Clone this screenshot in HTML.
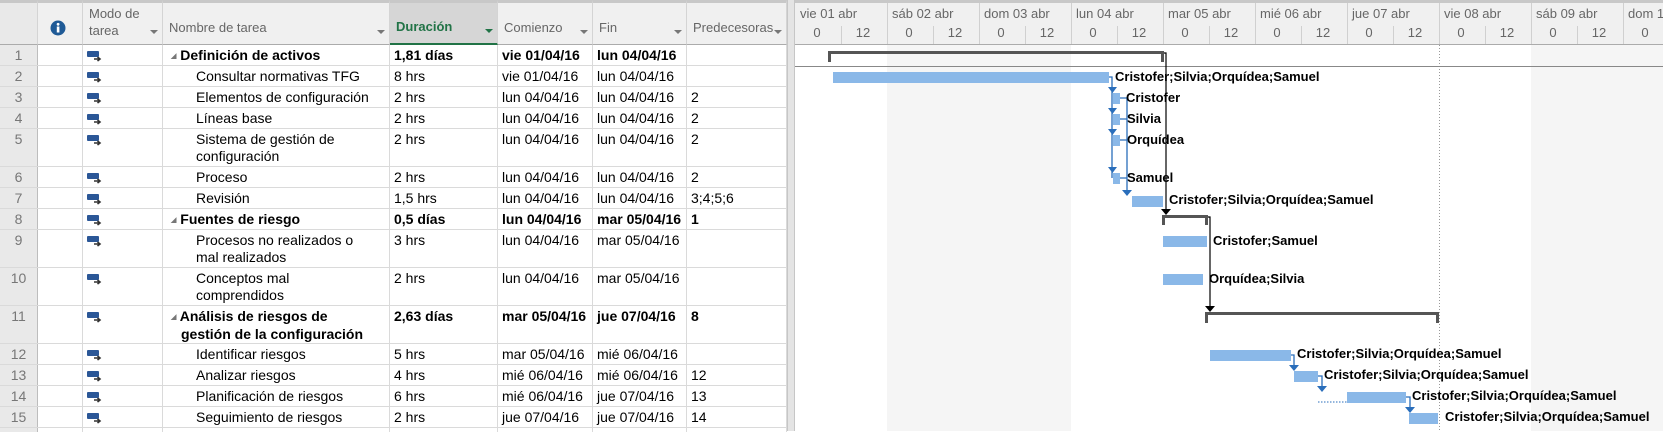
<!DOCTYPE html>
<html><head><meta charset="utf-8"><style>
*{margin:0;padding:0;box-sizing:border-box}
body{width:1663px;height:431px;overflow:hidden;background:#fff;font-family:"Liberation Sans",Arial,sans-serif;position:relative}
.a{position:absolute}
.hd{position:absolute;top:0;height:45px;background:#f0f0f0;border-top:3px solid #c8c8c8;border-bottom:1px solid #ababab;border-right:1px solid #d4d4d4;color:#666;font-size:13px}
.hd span{position:absolute;bottom:9px;left:6px;white-space:nowrap}
.dd{position:absolute;bottom:10px;right:4px;width:0;height:0;border-left:4px solid transparent;border-right:4px solid transparent;border-top:4px solid #777}
.row{position:absolute;left:0;width:787px;border-bottom:1px solid #dadada;font-size:14px;color:#000}
.row div{position:absolute;top:0;bottom:0;border-right:1px solid #dadada;padding:2px 0 0 4px;line-height:17px;white-space:nowrap;overflow:hidden}
.num{left:0;width:38px;background:#e9e9e9;color:#777;text-align:center;padding-left:0!important;border-right:1px solid #bdbdbd!important}
.inf{left:38px;width:45px}
.mod{left:83px;width:80px}
.nm{left:163px;width:227px}
.du{left:390px;width:108px}
.co{left:498px;width:95px}
.fi{left:593px;width:94px}
.pr{left:687px;width:100px}
.b{font-weight:bold}
.ic{position:absolute;left:4px;top:6px}
.tri{font-size:7px;color:#777;vertical-align:2px}
</style></head><body>
<div class="hd" style="left:0;width:38px;background:#e9e9e9"></div>
<div class="hd" style="left:38px;width:45px"><svg class="a" style="left:12px;top:17px" width="16" height="16"><circle cx="8" cy="8" r="7.5" fill="#1f5a96"/><rect x="6.8" y="6.5" width="2.6" height="6" fill="#fff"/><circle cx="8.1" cy="4.3" r="1.4" fill="#fff"/></svg></div>
<div class="hd" style="left:83px;width:80px"><span style="bottom:5px;line-height:17px">Modo de<br>tarea</span><div class="dd"></div></div>
<div class="hd" style="left:163px;width:227px"><span>Nombre de tarea</span><div class="dd"></div></div>
<div class="hd" style="left:390px;width:108px;background:#d6d6d6;border-bottom:2px solid #217346;color:#217346;font-weight:bold"><span>Duración</span><div class="dd" style="border-top-color:#217346"></div></div>
<div class="hd" style="left:498px;width:95px"><span>Comienzo</span><div class="dd"></div></div>
<div class="hd" style="left:593px;width:94px"><span>Fin</span><div class="dd"></div></div>
<div class="hd" style="left:687px;width:100px"><span>Predecesoras</span><div class="dd"></div></div>
<div class="a" style="left:787px;top:0;width:8px;height:431px;background:#e4e4e4;border-left:1px solid #c6c6c6;border-right:1px solid #c6c6c6"></div>

<div class="row" style="top:45px;height:21px"><div class="num">1</div><div class="inf"></div><div class="mod"><svg class="ic" width="16" height="12"><rect x="0" y="0" width="12" height="6" rx="1" fill="#2b5797"/><path d="M7 8H12.5M10.5 6L13 8L10.5 10" stroke="#333" stroke-width="1.6" fill="none"/></svg></div><div class="nm b" style="padding-left:8px"><span class="tri">◢</span> Definición de activos</div><div class="du b">1,81 días</div><div class="co b">vie 01/04/16</div><div class="fi b">lun 04/04/16</div><div class="pr"></div></div>
<div class="row" style="top:66px;height:21px"><div class="num">2</div><div class="inf"></div><div class="mod"><svg class="ic" width="16" height="12"><rect x="0" y="0" width="12" height="6" rx="1" fill="#2b5797"/><path d="M7 8H12.5M10.5 6L13 8L10.5 10" stroke="#333" stroke-width="1.6" fill="none"/></svg></div><div class="nm" style="padding-left:33px">Consultar normativas TFG</div><div class="du">8 hrs</div><div class="co">vie 01/04/16</div><div class="fi">lun 04/04/16</div><div class="pr"></div></div>
<div class="row" style="top:87px;height:21px"><div class="num">3</div><div class="inf"></div><div class="mod"><svg class="ic" width="16" height="12"><rect x="0" y="0" width="12" height="6" rx="1" fill="#2b5797"/><path d="M7 8H12.5M10.5 6L13 8L10.5 10" stroke="#333" stroke-width="1.6" fill="none"/></svg></div><div class="nm" style="padding-left:33px">Elementos de configuración</div><div class="du">2 hrs</div><div class="co">lun 04/04/16</div><div class="fi">lun 04/04/16</div><div class="pr">2</div></div>
<div class="row" style="top:108px;height:21px"><div class="num">4</div><div class="inf"></div><div class="mod"><svg class="ic" width="16" height="12"><rect x="0" y="0" width="12" height="6" rx="1" fill="#2b5797"/><path d="M7 8H12.5M10.5 6L13 8L10.5 10" stroke="#333" stroke-width="1.6" fill="none"/></svg></div><div class="nm" style="padding-left:33px">Líneas base</div><div class="du">2 hrs</div><div class="co">lun 04/04/16</div><div class="fi">lun 04/04/16</div><div class="pr">2</div></div>
<div class="row" style="top:129px;height:38px"><div class="num">5</div><div class="inf"></div><div class="mod"><svg class="ic" width="16" height="12"><rect x="0" y="0" width="12" height="6" rx="1" fill="#2b5797"/><path d="M7 8H12.5M10.5 6L13 8L10.5 10" stroke="#333" stroke-width="1.6" fill="none"/></svg></div><div class="nm" style="padding-left:33px">Sistema de gestión de<br>configuración</div><div class="du">2 hrs</div><div class="co">lun 04/04/16</div><div class="fi">lun 04/04/16</div><div class="pr">2</div></div>
<div class="row" style="top:167px;height:21px"><div class="num">6</div><div class="inf"></div><div class="mod"><svg class="ic" width="16" height="12"><rect x="0" y="0" width="12" height="6" rx="1" fill="#2b5797"/><path d="M7 8H12.5M10.5 6L13 8L10.5 10" stroke="#333" stroke-width="1.6" fill="none"/></svg></div><div class="nm" style="padding-left:33px">Proceso</div><div class="du">2 hrs</div><div class="co">lun 04/04/16</div><div class="fi">lun 04/04/16</div><div class="pr">2</div></div>
<div class="row" style="top:188px;height:21px"><div class="num">7</div><div class="inf"></div><div class="mod"><svg class="ic" width="16" height="12"><rect x="0" y="0" width="12" height="6" rx="1" fill="#2b5797"/><path d="M7 8H12.5M10.5 6L13 8L10.5 10" stroke="#333" stroke-width="1.6" fill="none"/></svg></div><div class="nm" style="padding-left:33px">Revisión</div><div class="du">1,5 hrs</div><div class="co">lun 04/04/16</div><div class="fi">lun 04/04/16</div><div class="pr">3;4;5;6</div></div>
<div class="row" style="top:209px;height:21px"><div class="num">8</div><div class="inf"></div><div class="mod"><svg class="ic" width="16" height="12"><rect x="0" y="0" width="12" height="6" rx="1" fill="#2b5797"/><path d="M7 8H12.5M10.5 6L13 8L10.5 10" stroke="#333" stroke-width="1.6" fill="none"/></svg></div><div class="nm b" style="padding-left:8px"><span class="tri">◢</span> Fuentes de riesgo</div><div class="du b">0,5 días</div><div class="co b">lun 04/04/16</div><div class="fi b">mar 05/04/16</div><div class="pr b">1</div></div>
<div class="row" style="top:230px;height:38px"><div class="num">9</div><div class="inf"></div><div class="mod"><svg class="ic" width="16" height="12"><rect x="0" y="0" width="12" height="6" rx="1" fill="#2b5797"/><path d="M7 8H12.5M10.5 6L13 8L10.5 10" stroke="#333" stroke-width="1.6" fill="none"/></svg></div><div class="nm" style="padding-left:33px">Procesos no realizados o<br>mal realizados</div><div class="du">3 hrs</div><div class="co">lun 04/04/16</div><div class="fi">mar 05/04/16</div><div class="pr"></div></div>
<div class="row" style="top:268px;height:38px"><div class="num">10</div><div class="inf"></div><div class="mod"><svg class="ic" width="16" height="12"><rect x="0" y="0" width="12" height="6" rx="1" fill="#2b5797"/><path d="M7 8H12.5M10.5 6L13 8L10.5 10" stroke="#333" stroke-width="1.6" fill="none"/></svg></div><div class="nm" style="padding-left:33px">Conceptos mal<br>comprendidos</div><div class="du">2 hrs</div><div class="co">lun 04/04/16</div><div class="fi">mar 05/04/16</div><div class="pr"></div></div>
<div class="row" style="top:306px;height:38px"><div class="num">11</div><div class="inf"></div><div class="mod"><svg class="ic" width="16" height="12"><rect x="0" y="0" width="12" height="6" rx="1" fill="#2b5797"/><path d="M7 8H12.5M10.5 6L13 8L10.5 10" stroke="#333" stroke-width="1.6" fill="none"/></svg></div><div class="nm b" style="padding-left:8px"><span class="tri">◢</span> Análisis de riesgos de<br><span style="padding-left:10px">gestión de la configuración</span></div><div class="du b">2,63 días</div><div class="co b">mar 05/04/16</div><div class="fi b">jue 07/04/16</div><div class="pr b">8</div></div>
<div class="row" style="top:344px;height:21px"><div class="num">12</div><div class="inf"></div><div class="mod"><svg class="ic" width="16" height="12"><rect x="0" y="0" width="12" height="6" rx="1" fill="#2b5797"/><path d="M7 8H12.5M10.5 6L13 8L10.5 10" stroke="#333" stroke-width="1.6" fill="none"/></svg></div><div class="nm" style="padding-left:33px">Identificar riesgos</div><div class="du">5 hrs</div><div class="co">mar 05/04/16</div><div class="fi">mié 06/04/16</div><div class="pr"></div></div>
<div class="row" style="top:365px;height:21px"><div class="num">13</div><div class="inf"></div><div class="mod"><svg class="ic" width="16" height="12"><rect x="0" y="0" width="12" height="6" rx="1" fill="#2b5797"/><path d="M7 8H12.5M10.5 6L13 8L10.5 10" stroke="#333" stroke-width="1.6" fill="none"/></svg></div><div class="nm" style="padding-left:33px">Analizar riesgos</div><div class="du">4 hrs</div><div class="co">mié 06/04/16</div><div class="fi">mié 06/04/16</div><div class="pr">12</div></div>
<div class="row" style="top:386px;height:21px"><div class="num">14</div><div class="inf"></div><div class="mod"><svg class="ic" width="16" height="12"><rect x="0" y="0" width="12" height="6" rx="1" fill="#2b5797"/><path d="M7 8H12.5M10.5 6L13 8L10.5 10" stroke="#333" stroke-width="1.6" fill="none"/></svg></div><div class="nm" style="padding-left:33px">Planificación de riesgos</div><div class="du">6 hrs</div><div class="co">mié 06/04/16</div><div class="fi">jue 07/04/16</div><div class="pr">13</div></div>
<div class="row" style="top:407px;height:21px"><div class="num">15</div><div class="inf"></div><div class="mod"><svg class="ic" width="16" height="12"><rect x="0" y="0" width="12" height="6" rx="1" fill="#2b5797"/><path d="M7 8H12.5M10.5 6L13 8L10.5 10" stroke="#333" stroke-width="1.6" fill="none"/></svg></div><div class="nm" style="padding-left:33px">Seguimiento de riesgos</div><div class="du">2 hrs</div><div class="co">jue 07/04/16</div><div class="fi">jue 07/04/16</div><div class="pr">14</div></div>
<div class="row" style="top:428px;height:4px;border:0"><div class="num"></div><div class="inf"></div><div class="mod"></div><div class="nm"></div><div class="du"></div><div class="co"></div><div class="fi"></div><div class="pr"></div></div>

<svg class="a" style="left:0;top:0" width="1663" height="431" font-family="Liberation Sans, Arial, sans-serif">
<rect x="795" y="0" width="868" height="45" fill="#f0f0f0"/>
<rect x="795" y="0" width="868" height="3" fill="#c8c8c8"/>
<line x1="795" y1="44.5" x2="1663" y2="44.5" stroke="#ababab"/>
<rect x="887" y="45" width="184" height="386" fill="#f5f5f5"/>
<rect x="1531" y="45" width="132" height="386" fill="#f5f5f5"/>
<g stroke="#d0d0d0">
<line x1="887.5" y1="3" x2="887.5" y2="44"/><line x1="979.5" y1="3" x2="979.5" y2="44"/><line x1="1071.5" y1="3" x2="1071.5" y2="44"/><line x1="1163.5" y1="3" x2="1163.5" y2="44"/><line x1="1255.5" y1="3" x2="1255.5" y2="44"/><line x1="1347.5" y1="3" x2="1347.5" y2="44"/><line x1="1439.5" y1="3" x2="1439.5" y2="44"/><line x1="1531.5" y1="3" x2="1531.5" y2="44"/><line x1="1623.5" y1="3" x2="1623.5" y2="44"/>
<line x1="841.5" y1="26" x2="841.5" y2="44"/><line x1="933.5" y1="26" x2="933.5" y2="44"/><line x1="1025.5" y1="26" x2="1025.5" y2="44"/><line x1="1117.5" y1="26" x2="1117.5" y2="44"/><line x1="1209.5" y1="26" x2="1209.5" y2="44"/><line x1="1301.5" y1="26" x2="1301.5" y2="44"/><line x1="1393.5" y1="26" x2="1393.5" y2="44"/><line x1="1485.5" y1="26" x2="1485.5" y2="44"/><line x1="1577.5" y1="26" x2="1577.5" y2="44"/>
</g>
<g fill="#666" font-size="13">
<text x="800" y="18">vie 01 abr</text><text x="892" y="18">sáb 02 abr</text><text x="984" y="18">dom 03 abr</text><text x="1076" y="18">lun 04 abr</text><text x="1168" y="18">mar 05 abr</text><text x="1260" y="18">mié 06 abr</text><text x="1352" y="18">jue 07 abr</text><text x="1444" y="18">vie 08 abr</text><text x="1536" y="18">sáb 09 abr</text><text x="1628" y="18">dom 10 abr</text>
</g>
<g fill="#666" font-size="13" text-anchor="middle">
<text x="817" y="37">0</text><text x="863" y="37">12</text><text x="909" y="37">0</text><text x="955" y="37">12</text><text x="1001" y="37">0</text><text x="1047" y="37">12</text><text x="1093" y="37">0</text><text x="1139" y="37">12</text><text x="1185" y="37">0</text><text x="1231" y="37">12</text><text x="1277" y="37">0</text><text x="1323" y="37">12</text><text x="1369" y="37">0</text><text x="1415" y="37">12</text><text x="1461" y="37">0</text><text x="1507" y="37">12</text><text x="1553" y="37">0</text><text x="1599" y="37">12</text><text x="1645" y="37">0</text>
</g>
<line x1="1439.5" y1="45" x2="1439.5" y2="431" stroke="#999" stroke-dasharray="1,2"/>
<line x1="795" y1="66.5" x2="1663" y2="66.5" stroke="#888"/>
<g fill="#555">
<rect x="828" y="51" width="336" height="3"/><rect x="828" y="51" width="3" height="11"/><rect x="1161" y="51" width="3" height="11"/>
<rect x="1162" y="215" width="46" height="3"/><rect x="1162" y="215" width="3" height="10"/><rect x="1205" y="215" width="3" height="10"/>
<rect x="1205" y="312" width="234" height="3"/><rect x="1205" y="312" width="3" height="11"/><rect x="1436" y="312" width="3" height="11"/>
</g>
<g fill="#8ab8e8">
<rect x="833" y="72" width="276" height="11"/>
<rect x="1113" y="93" width="7" height="11"/>
<rect x="1113" y="114" width="7" height="11"/>
<rect x="1113" y="135" width="7" height="11"/>
<rect x="1113" y="173" width="7" height="11"/>
<rect x="1132" y="196" width="31" height="11"/>
<rect x="1163" y="236" width="44" height="11"/>
<rect x="1163" y="274" width="40" height="11"/>
<rect x="1210" y="350" width="81" height="11"/>
<rect x="1294" y="371" width="24" height="11"/>
<rect x="1347" y="392" width="59" height="11"/>
<rect x="1409" y="413" width="29" height="11"/>
</g>
<g stroke="#000" stroke-width="1.2" fill="none">
<path d="M1164 53H1166V210"/><path d="M1208 217H1210V307"/>
</g>
<g fill="#000"><path d="M1161 209H1171L1166 215Z"/><path d="M1205 306H1215L1210 312Z"/></g>
<g stroke="#2a6ebb" stroke-width="1.3" fill="none">
<path d="M1109 77H1112V178"/>
<path d="M1120 98H1127V190M1120 119H1127M1120 140H1127M1120 178H1127"/>
<path d="M1291 355H1294V366"/><path d="M1318 376H1322V387"/><path d="M1406 397H1410V408"/>
</g>
<path d="M1318 402H1347" stroke="#2a6ebb" stroke-dasharray="1.5,1.5"/>
<g fill="#2a6ebb">
<path d="M1108 87H1117L1112.5 93Z"/><path d="M1108 108H1117L1112.5 114Z"/><path d="M1108 129H1117L1112.5 135Z"/><path d="M1108 167H1117L1112.5 173Z"/>
<path d="M1122 190H1132L1127 196Z"/>
<path d="M1289 365H1299L1294 371Z"/><path d="M1317 386H1327L1322 392Z"/><path d="M1405 407H1415L1410 413Z"/>
</g>
<g font-size="13" font-weight="bold" fill="#000">
<text x="1115" y="81">Cristofer;Silvia;Orquídea;Samuel</text>
<text x="1126" y="102">Cristofer</text>
<text x="1127" y="123">Silvia</text>
<text x="1127" y="144">Orquídea</text>
<text x="1127" y="182">Samuel</text>
<text x="1169" y="204">Cristofer;Silvia;Orquídea;Samuel</text>
<text x="1213" y="245">Cristofer;Samuel</text>
<text x="1209" y="283">Orquídea;Silvia</text>
<text x="1297" y="358">Cristofer;Silvia;Orquídea;Samuel</text>
<text x="1324" y="379">Cristofer;Silvia;Orquídea;Samuel</text>
<text x="1412" y="400">Cristofer;Silvia;Orquídea;Samuel</text>
<text x="1445" y="421">Cristofer;Silvia;Orquídea;Samuel</text>
</g>
</svg>
</body></html>
